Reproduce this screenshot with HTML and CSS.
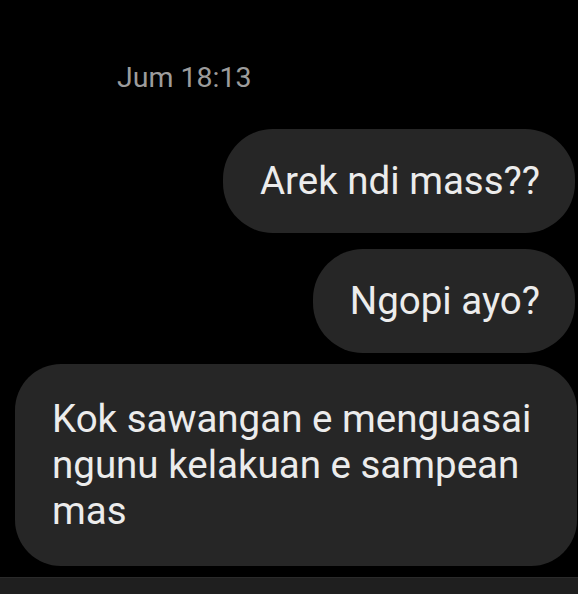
FILE: index.html
```html
<!DOCTYPE html>
<html>
<head>
<meta charset="utf-8">
<link rel="stylesheet" href="styles.css">
</head>
<body>
<div class="chat">
  <div class="time">Jum 18:13</div>
  <div class="bubble sent b1">Arek ndi mass??</div>
  <div class="bubble sent b2">Ngopi ayo?</div>
  <div class="bubble recv b3">Kok sawangan e menguasai ngunu kelakuan e sampean mas</div>
</div>
<div class="bar"></div>
</body>
</html>
```
FILE: styles.css
```css
html, body {
  margin: 0;
  padding: 0;
  background: #000;
}
body {
  width: 578px;
  height: 594px;
  overflow: hidden;
  font-family: Roboto, "Liberation Sans", sans-serif;
  display: flex;
  flex-direction: column;
}
.chat {
  height: 577px;
  display: flex;
  flex-direction: column;
  align-items: flex-start;
}
.time {
  margin-top: 61px;
  padding-left: 117px;
  font-size: 28.5px;
  line-height: 33px;
  color: #9c9c9c;
}
.bubble {
  background: #262626;
  color: #ececec;
  font-size: 38.5px;
  line-height: 46px;
  border-radius: 50px;
  box-sizing: border-box;
}
.sent {
  align-self: flex-end;
  margin-right: 3px;
  padding: 29px 35px 29px 37px;
}
.b1 {
  margin-top: 35px;
}
.b2 {
  margin-top: 16px;
}
.recv {
  margin-top: 11px;
  margin-left: 15px;
  width: 562px;
  padding: 32px 20px 32px 37px;
  border-radius: 46px;
}
.bar {
  height: 17px;
  background: #1f1f1f;
  border-top: 1px solid #2a2a2a;
  box-sizing: border-box;
}
```
